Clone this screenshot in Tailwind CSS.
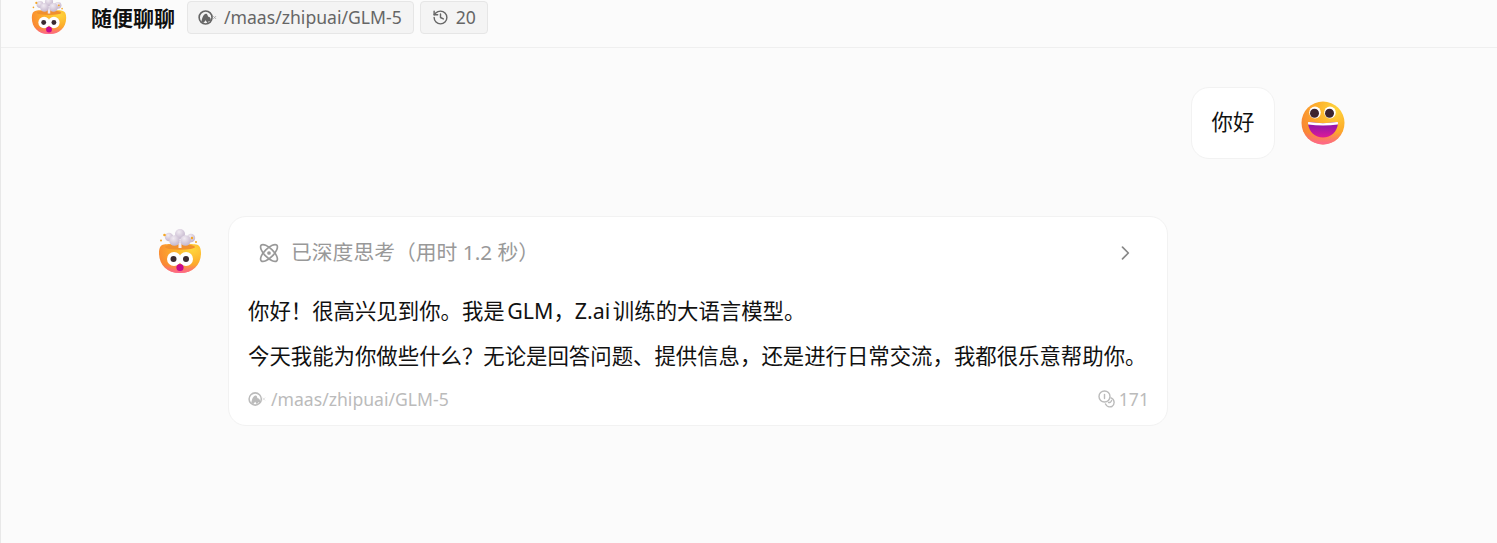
<!DOCTYPE html>
<html lang="zh">
<head>
  <meta charset="UTF-8" />
  <meta name="viewport" content="width=device-width, initial-scale=1.0" />
  <title>随便聊聊</title>
  <script src="https://cdn.jsdelivr.net/npm/@tailwindcss/browser@4"></script>
</head>
<body class="h-[543px] overflow-hidden bg-[#fbfbfb] text-[#111] font-['Noto_Sans','Noto_Sans_CJK_SC',sans-serif]">
  <svg width="0" height="0" class="absolute">
    <defs>
      <radialGradient id="face" cx="0.78" cy="0.2" r="0.95">
        <stop offset="0" stop-color="#ffd63c" />
        <stop offset="0.45" stop-color="#fdb02c" />
        <stop offset="0.8" stop-color="#fa9030" />
        <stop offset="1" stop-color="#f97a40" />
      </radialGradient>
      <linearGradient id="blush" x1="0" y1="0" x2="0" y2="1">
        <stop offset="0.72" stop-color="#ff5fa0" stop-opacity="0" />
        <stop offset="1" stop-color="#ff5fa0" stop-opacity="0.85" />
      </linearGradient>
      <radialGradient id="puff" cx="0.4" cy="0.3" r="0.8">
        <stop offset="0" stop-color="#f1ebf2" />
        <stop offset="1" stop-color="#bfafc8" />
      </radialGradient>
      <linearGradient id="mouth" x1="0" y1="0" x2="0" y2="1">
        <stop offset="0" stop-color="#8216ad" />
        <stop offset="1" stop-color="#dd1a98" />
      </linearGradient>
      <symbol id="head" viewBox="0 0 44 44">
        <path d="M1 24c0-5 1.500-8 5-8.500C12 14.500 32 14.500 38 15.500c3.500.5 5 3.500 5 8.500 0 12-8 20-21 20S1 36 1 24z" fill="url(#face)" />
        <path d="M1 24c0-5 1.500-8 5-8.500C12 14.500 32 14.500 38 15.500c3.500.5 5 3.500 5 8.500 0 12-8 20-21 20S1 36 1 24z" fill="url(#blush)" />
        <ellipse cx="22" cy="18" rx="15" ry="2.800" fill="#f0902e" />
        <rect x="20.500" y="13" width="3" height="6" fill="#f1e9f1" />
        <circle cx="11" cy="8" r="4.200" fill="url(#puff)" />
        <circle cx="33" cy="9" r="4.200" fill="url(#puff)" />
        <circle cx="22" cy="5" r="5" fill="url(#puff)" />
        <circle cx="16.500" cy="11.500" r="5.300" fill="url(#puff)" />
        <circle cx="27.500" cy="11.500" r="5.300" fill="url(#puff)" />
        <circle cx="6.500" cy="6" r="1.300" fill="#f5a623" />
        <circle cx="3" cy="11.500" r="1" fill="#f5a623" />
        <circle cx="34" cy="9" r="1.200" fill="#f5a623" />
        <circle cx="38" cy="13" r="1" fill="#f5a623" />
        <circle cx="16" cy="30" r="7" fill="#fff" />
        <circle cx="28" cy="30" r="7" fill="#fff" />
        <circle cx="15.500" cy="30" r="3" fill="#3a2a30" />
        <circle cx="28" cy="30" r="3" fill="#3a2a30" />
        <circle cx="22" cy="38.500" r="3.600" fill="#c8088f" />
      </symbol>
      <symbol id="grin" viewBox="0 0 44 44">
        <circle cx="22" cy="22" r="21.500" fill="url(#face)" />
        <circle cx="22" cy="22" r="21.500" fill="url(#blush)" />
        <ellipse cx="14" cy="11.500" rx="5.800" ry="6" fill="#fff" />
        <ellipse cx="29" cy="11.500" rx="5.800" ry="6" fill="#fff" />
        <circle cx="13.500" cy="12.300" r="4.500" fill="#3d2530" />
        <circle cx="28.500" cy="12.300" r="4.500" fill="#3d2530" />
        <path d="M8 21c9 1.500 19 1.500 28 0 .8 0 1.200.4 1 1.200C36 31 30 36.500 22 36.500S8 31 7 22.200c-.2-.8.200-1.200 1-1.200z" fill="url(#mouth)" />
        <path d="M8 21c9 1.500 19 1.500 28 0 .8 0 1.200.4 1 1.200l-.2 1.200c-9.500 1.400-20 1.400-29.600 0L7 22.200c-.2-.8.200-1.200 1-1.200z" fill="#fff" />
      </symbol>
      <symbol id="logo" viewBox="0 0 20 20">
        <circle cx="8" cy="10" r="6.800" fill="none" stroke="currentColor" stroke-width="1.700" />
        <path d="M3.500 15c.8-5 2.500-9 4.800-9s1.500 3 3 3.300 2.700 2.500 2.200 5l-2-.6-1.500 2.300-2-3-2 2.500z" fill="currentColor" />
        <path d="M16 8.500l3 3M19 8.500l-3 3" stroke="currentColor" stroke-width=".8" opacity=".6" />
      </symbol>
    </defs>
  </svg>

  <div class="h-full border-l border-[#e8e8e8]">
    <header class="flex h-[48px] items-start border-b border-[#efefef]">
      <svg class="ml-[30px] mt-[-2px] h-[36px] w-[36px] shrink-0"><use href="#head" /></svg>
      <h1 class="ml-[24px] mt-[4px] text-[21px] leading-[28px] font-bold">随便聊聊</h1>
      <div class="ml-[12px] mt-px flex h-[33px] items-center gap-[7px] rounded-[4px] border border-[#e6e6e6] bg-[#f4f4f4] pl-[10px] pr-[11px] text-[17.6px] text-[#666]">
        <svg class="h-[19px] w-[19px]"><use href="#logo" /></svg>
        <span>/maas/zhipuai/GLM-5</span>
      </div>
      <div class="ml-[6px] mt-px flex h-[33px] items-center gap-[7px] rounded-[4px] border border-[#e6e6e6] bg-[#f4f4f4] pl-[11px] pr-[11px] text-[17.6px] text-[#666]">
        <svg class="h-[17px] w-[17px]" viewBox="0 0 24 24" fill="none" stroke="currentColor" stroke-width="2" stroke-linecap="round" stroke-linejoin="round"><path d="M3 12a9 9 0 1 0 9-9 9.750 9.750 0 0 0-6.740 2.740L3 8" /><path d="M3 3v5h5" /><path d="M12 7v5l4 2" /></svg>
        <span>20</span>
      </div>
    </header>

    <main>
      <section class="flex items-center justify-end gap-[26px] pr-[152px] pt-[39px]">
        <div class="flex h-[72px] w-[84px] items-center justify-center rounded-[18px] border border-[#f2f2f2] bg-white pb-[2px] text-[21.4px]">你好</div>
        <svg class="h-[44px] w-[44px]"><use href="#grin" /></svg>
      </section>

      <section class="mt-[57px] flex items-start gap-[26px] pl-[157px]">
        <svg class="mt-[13px] h-[44px] w-[44px] shrink-0"><use href="#head" /></svg>
        <article class="flex h-[210px] w-[940px] flex-col rounded-[18px] border border-[#f2f2f2] bg-white px-[19px]">
          <div class="flex h-[71px] items-center pl-[11px] pr-[13px] pt-px text-[#999]">
            <svg class="h-[20px] w-[20px]" viewBox="0 0 20 20" fill="none" stroke="currentColor" stroke-width="1.700"><ellipse cx="10" cy="10" rx="11" ry="4.500" transform="rotate(45 10 10)" /><ellipse cx="10" cy="10" rx="11" ry="4.500" transform="rotate(-45 10 10)" /><circle cx="10" cy="10" r="1" fill="currentColor" /></svg>
            <span class="ml-[12px] text-[20.8px]">已深度思考（用时 1.2 秒）</span>
            <svg class="ml-auto h-[20px] w-[20px]" viewBox="0 0 24 24" fill="none" stroke="#888" stroke-width="2" stroke-linecap="round" stroke-linejoin="round"><path d="m9 5 7 7-7 7" /></svg>
          </div>
          <p class="text-[21.4px] leading-[45px] [word-spacing:-3px]">你好！很高兴见到你。我是 GLM，Z.ai 训练的大语言模型。</p>
          <p class="text-[21.4px] leading-[45px]">今天我能为你做些什么？无论是回答问题、提供信息，还是进行日常交流，我都很乐意帮助你。</p>
          <footer class="mr-[-1px] mt-[9px] flex items-center text-[17.6px] leading-[24px] text-[#bbb]">
            <svg class="h-[18px] w-[18px]"><use href="#logo" /></svg>
            <span class="ml-[5px]">/maas/zhipuai/GLM-5</span>
            <svg class="ml-auto h-[18px] w-[18px]" viewBox="0 0 18 18" fill="none" stroke="currentColor" stroke-width="1.400" stroke-linecap="round"><circle cx="6.500" cy="6.500" r="5.500" /><path d="M6.500 4.500v4" /><path d="M13 7.800a5 5 0 0 1 1 8.700 5 5 0 0 1-6.500-2.500" /><path d="M10.500 12.500a2.500 2.500 0 0 0 3-2" /></svg>
            <span class="ml-[3px]">171</span>
          </footer>
        </article>
      </section>
    </main>
  </div>
</body>
</html>
